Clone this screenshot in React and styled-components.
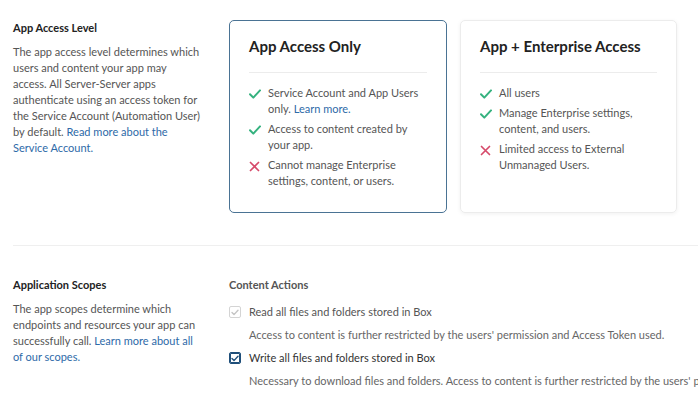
import React from "react";
import styled, { createGlobalStyle } from "styled-components";

const Global = createGlobalStyle`
  html, body { margin: 0; padding: 0; background: #fff; }
  body { font-family: Lato, "Open Sans", sans-serif; color: #4e4e4e; -webkit-font-smoothing: antialiased; }
  * { box-sizing: border-box; }
`;

const Page = styled.div`
  width: 698px;
  height: 400px;
  overflow: hidden;
  padding-left: 13px;
`;

const Section = styled.section`
  display: grid;
  grid-template-columns: 216px 1fr;
  padding-top: ${(p) => p.$top}px;
`;

const Side = styled.div`
  width: 187.5px;
`;

const SideTitle = styled.h3`
  margin: 0 0 ${(p) => p.$gap}px;
  font-size: 11px;
  line-height: 16px;
  font-weight: 700;
  color: #222;
`;

const SideText = styled.p`
  margin: 0;
  font-size: 11px;
  line-height: 16px;
  color: #555;
`;

const Link = styled.a`
  color: #2e6aa8;
  text-decoration: none;
`;

const Cards = styled.div`
  display: grid;
  grid-template-columns: 218px 217px;
  gap: 13px;
`;

const Card = styled.div`
  border: 1px solid ${(p) => (p.$selected ? "#4a7394" : "#ececec")};
  border-radius: 5px;
  padding: 15px 19px 40px;
  height: 193px;
  box-shadow: ${(p) => (p.$selected ? "none" : "0 1px 4px rgba(0,0,0,0.06)")};
`;

const CardTitle = styled.h2`
  margin: 0;
  font-size: 15px;
  line-height: 20px;
  font-weight: 700;
  color: #222;
`;

const Rule = styled.hr`
  border: 0;
  border-top: 1px solid #ececec;
  margin: 16px 0 12px;
`;

const List = styled.ul`
  list-style: none;
  margin: 0;
  padding: 0;
  display: flex;
  flex-direction: column;
  gap: 4px;
`;

const Item = styled.li`
  display: grid;
  grid-template-columns: 19px 1fr;
  font-size: 11px;
  line-height: 16px;
  color: #555;
`;

const Icon = styled.span`
  display: flex;
  align-items: flex-start;
  padding-top: 4px;
`;

const Divider = styled.div`
  height: 1px;
  background: #efefef;
  margin-top: 32px;
`;

const Scopes = styled.div``;

const GroupTitle = styled.div`
  font-size: 11px;
  line-height: 16px;
  font-weight: 700;
  color: #555;
  margin-bottom: 11px;
`;

const Option = styled.label`
  display: grid;
  grid-template-columns: 20px 1fr;
  align-items: center;
  font-size: 11px;
  line-height: 16px;
  color: ${(p) => (p.$disabled ? "#555" : "#333")};
`;

const Box = styled.span`
  width: 12px;
  height: 12px;
  border-radius: 2px;
  border: 1px solid ${(p) => (p.$disabled ? "#d4d4d4" : "#1f4f7a")};
  background: #fff;
  display: flex;
  align-items: center;
  justify-content: center;
  ${(p) => (!p.$disabled ? "box-shadow: inset 0 0 0 1px #1f4f7a;" : "")}
`;

const Help = styled.div`
  margin: 7px 0 7px 20px;
  font-size: 11px;
  line-height: 16px;
  color: #666;
  white-space: nowrap;
`;

const Check = () => (
  <svg width="12" height="10" viewBox="0 0 12 10">
    <path d="M1 5.2 L4.3 8.6 L11 1.4" fill="none" stroke="#35b27f" strokeWidth="2" strokeLinecap="round" strokeLinejoin="round" />
  </svg>
);

const Cross = () => (
  <svg width="11" height="11" viewBox="0 0 11 11">
    <path d="M1.5 1.5 L9.5 9.5 M9.5 1.5 L1.5 9.5" fill="none" stroke="#d64a6a" strokeWidth="1.7" strokeLinecap="round" />
  </svg>
);

const Tick = ({ color }) => (
  <svg width="8" height="7" viewBox="0 0 8 7">
    <path d="M1 3.6 L3 5.6 L7 1.2" fill="none" stroke={color} strokeWidth="1.4" strokeLinecap="round" strokeLinejoin="round" />
  </svg>
);

const Row = ({ ok, children }) => (
  <Item>
    <Icon>{ok ? <Check /> : <Cross />}</Icon>
    <span>{children}</span>
  </Item>
);

export default function App() {
  return (
    <>
      <Global />
      <Page>
        <Section $top={20}>
          <Side>
            <SideTitle $gap={8}>App Access Level</SideTitle>
            <SideText>
              The app access level determines which users and content your app may access. All Server-Server apps
              authenticate using an access token for the Service Account (Automation User) by default.{" "}
              <Link href="#">Read more about the Service Account.</Link>
            </SideText>
          </Side>
          <Cards>
            <Card $selected>
              <CardTitle>App Access Only</CardTitle>
              <Rule />
              <List>
                <Row ok>
                  Service Account and App Users only. <Link href="#">Learn more.</Link>
                </Row>
                <Row ok>Access to content created by your app.</Row>
                <Row>Cannot manage Enterprise settings, content, or users.</Row>
              </List>
            </Card>
            <Card>
              <CardTitle>App + Enterprise Access</CardTitle>
              <Rule />
              <List>
                <Row ok>All users</Row>
                <Row ok>Manage Enterprise settings, content, and users.</Row>
                <Row>Limited access to External Unmanaged Users.</Row>
              </List>
            </Card>
          </Cards>
        </Section>
        <Divider />
        <Section $top={31}>
          <Side>
            <SideTitle $gap={8}>Application Scopes</SideTitle>
            <SideText>
              The app scopes determine which endpoints and resources your app can successfully call.{" "}
              <Link href="#">Learn more about all of our scopes.</Link>
            </SideText>
          </Side>
          <Scopes>
            <GroupTitle>Content Actions</GroupTitle>
            <Option $disabled>
              <Box $disabled>
                <Tick color="#c4c4c4" />
              </Box>
              Read all files and folders stored in Box
            </Option>
            <Help>Access to content is further restricted by the users' permission and Access Token used.</Help>
            <Option>
              <Box>
                <Tick color="#1f4f7a" />
              </Box>
              Write all files and folders stored in Box
            </Option>
            <Help>
              Necessary to download files and folders. Access to content is further restricted by the users' permission
              and Access Token used.
            </Help>
          </Scopes>
        </Section>
      </Page>
    </>
  );
}
